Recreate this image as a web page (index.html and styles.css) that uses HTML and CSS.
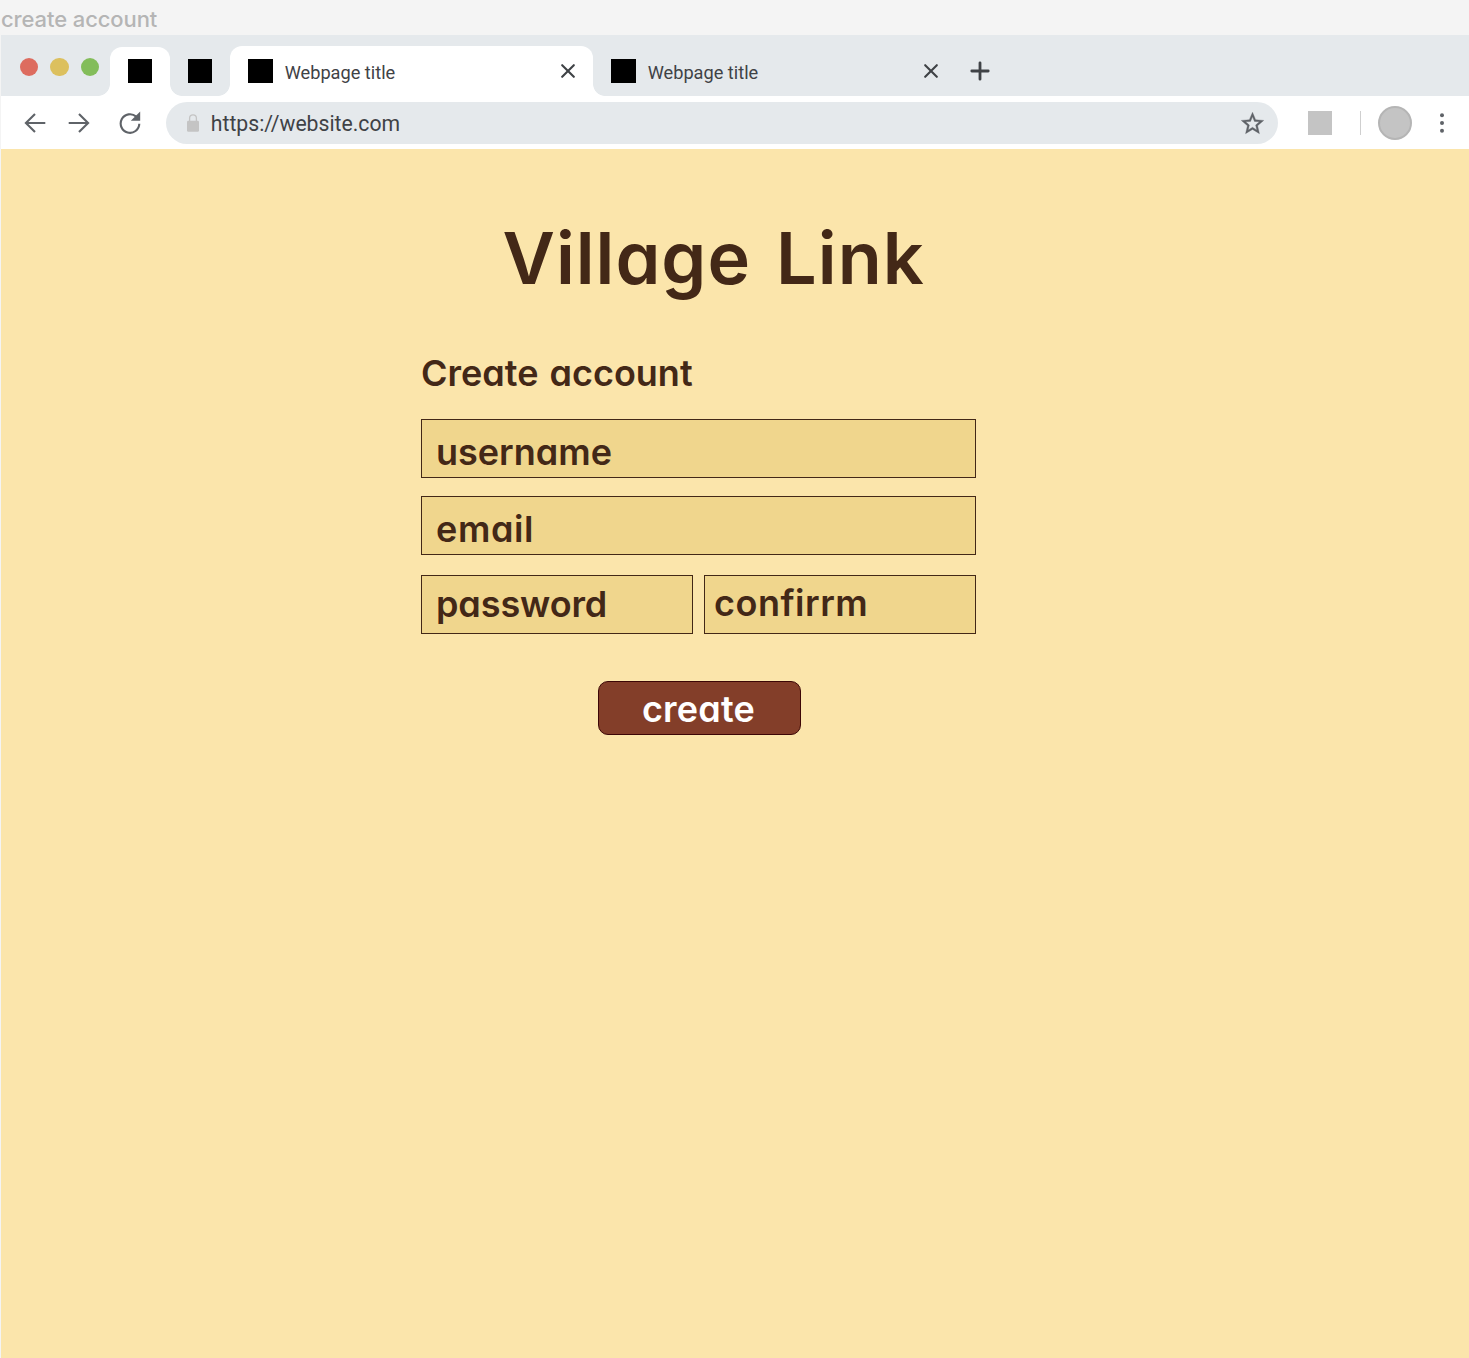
FILE: index.html
```html
<!DOCTYPE html>
<html lang="en">
<head>
<meta charset="utf-8">
<title>create account</title>
<link rel="stylesheet" href="styles.css">
</head>
<body>
<div class="frame-label">create account</div>
<div class="browser">
  <div class="tab-strip">
    <div class="lights"><i class="light red"></i><i class="light yellow"></i><i class="light green"></i></div>
    <div class="tab pinned raised"><i class="favicon"></i></div>
    <div class="tab pinned"><i class="favicon"></i></div>
    <div class="tab wide raised active"><i class="favicon"></i><span class="tab-title">Webpage title</span>
      <svg class="close" viewBox="0 0 14 14"><path d="M1.2 1.2 12.8 12.8M12.8 1.2 1.2 12.8"/></svg></div>
    <div class="tab wide"><i class="favicon"></i><span class="tab-title">Webpage title</span>
      <svg class="close" viewBox="0 0 14 14"><path d="M1.2 1.2 12.8 12.8M12.8 1.2 1.2 12.8"/></svg></div>
    <svg class="new-tab" viewBox="0 0 20 20"><path d="M10 1.8V18.2M1.8 10H18.2"/></svg>
  </div>
  <div class="toolbar">
    <svg class="nav back" viewBox="0 0 22 20"><path d="M21.3 10H2M11 .9 1.9 10l9.1 9.1"/></svg>
    <svg class="nav forward" viewBox="0 0 22 20"><path d="M.7 10H20M11 .9l9.1 9.1-9.1 9.1"/></svg>
    <svg class="reload" viewBox="0 0 22 23"><path class="arc" d="M17.2 5.6A9.3 9.3 0 1 0 20.3 12.8"/><path class="head" d="M21.2 .4V9.8H11.8Z"/></svg>
    <div class="address">
      <svg class="lock" viewBox="0 0 12 18"><rect y="6.8" width="12" height="11" rx="1.4"/><path d="M2.6 7V4.2a3.4 3.4 0 0 1 6.8 0V7"/></svg>
      <span class="url">https://website.com</span>
      <svg class="star" viewBox="0 0 24 24"><path d="M22 9.24l-7.19-.62L12 2 9.19 8.63 2 9.24l5.46 4.73L5.82 21 12 17.27 18.18 21l-1.63-7.03L22 9.24zM12 15.4l-3.76 2.27 1-4.28-3.32-2.88 4.38-.38L12 6.1l1.71 4.04 4.38.38-3.32 2.88 1 4.28L12 15.4z"/></svg>
    </div>
    <i class="extension"></i>
    <i class="divider"></i>
    <i class="avatar"></i>
    <svg class="menu" viewBox="0 0 4 20"><circle cx="2" cy="2.3" r="2"/><circle cx="2" cy="10" r="2"/><circle cx="2" cy="17.7" r="2"/></svg>
  </div>
  <main class="page">
    <h1>Village Link</h1>
    <form class="signup">
      <h2>Create account</h2>
      <div class="field username">username</div>
      <div class="field email">email</div>
      <div class="field-row">
        <div class="field password">password</div>
        <div class="field confirm">confirrm</div>
      </div>
      <button class="create" type="button">create</button>
    </form>
  </main>
</div>
</body>
</html>
```
FILE: styles.css
```css
* { box-sizing: border-box; }
body { margin: 0; background: #f4f4f4; font-family: Roboto, "Liberation Sans", sans-serif; }
i, svg { display: block; flex: none; }
.frame-label { height: 35px; padding-left: 1px; color: #b5b5b5; font: 500 22px/38px Inter, sans-serif; letter-spacing: -.1px; }
.browser { margin-left: 1px; height: 1323px; display: flex; flex-direction: column; overflow: hidden; }

.tab-strip { height: 60.5px; display: flex; align-items: flex-end; background: #e5e9ec; }
.lights { width: 108.5px; height: 100%; padding: 22.5px 0 0 19px; display: flex; gap: 12px; }
.light { flex: none; width: 18.4px; height: 18.4px; border-radius: 50%; }
.red { background: #dd6c5f; }
.yellow { background: #dcc05e; }
.green { background: #83bd5a; }
.tab { position: relative; height: 48.5px; padding: 0 18px; display: flex; align-items: center; }
.pinned { width: 60.4px; }
.wide { width: 363px; }
.active { height: 50px; padding-top: 1.5px; }
.raised { background: #fff; border-radius: 12px 12px 0 0; }
.raised::before, .raised::after { content: ""; position: absolute; bottom: 0; width: 12px; height: 12px; }
.raised::before { right: 100%; background: radial-gradient(circle at 0 0, transparent 11.5px, #fff 12.2px); }
.raised::after { left: 100%; background: radial-gradient(circle at 100% 0, transparent 11.5px, #fff 12.2px); }
.favicon { width: 24.4px; height: 24.4px; background: #000; }
.tab-title { margin: 3px 0 0 12px; flex: 1; font-size: 18.2px; line-height: 24px; color: #3f4246; }
.close { width: 14px; height: 14px; fill: none; stroke: #3f4246; stroke-width: 2.1; stroke-linecap: round; }
.new-tab { width: 20px; height: 20px; margin: 0 0 15px 14px; fill: none; stroke: #3f4246; stroke-width: 2.8; stroke-linecap: round; }

.toolbar { height: 53px; padding: 2px 0 0 23.3px; display: flex; align-items: center; background: #fff; }
.nav { width: 22px; height: 20px; fill: none; stroke: #5f6368; stroke-width: 2.1; }
.forward { margin-left: 21.5px; }
.reload { width: 22px; height: 23px; margin: 0 0 1px 29.5px; }
.arc { fill: none; stroke: #5f6368; stroke-width: 2.1; }
.head { fill: #5f6368; }
.address { width: 1112px; height: 42px; margin-left: 24.5px; padding: 0 12px 0 21px; display: flex; align-items: center; border-radius: 21px; background: #e5e9ec; }
.lock { width: 12px; height: 18px; fill: #c4c4c4; }
.lock path { fill: none; stroke: #c4c4c4; stroke-width: 1.3; }
.url { margin-left: 12px; flex: 1; font-size: 21.2px; color: #3f4246; }
.star { width: 27px; height: 27px; fill: #5f6368; stroke: #5f6368; stroke-width: .3; }
.extension { width: 24px; height: 24px; margin-left: 30px; background: #c4c4c4; }
.divider { width: 1.3px; height: 24px; margin-left: 28px; background: #cfcfcf; }
.avatar { width: 34px; height: 34px; margin-left: 17px; border: 2.6px solid #b5b5b5; border-radius: 50%; background: #c4c4c4; }
.menu { width: 4px; height: 20px; margin-left: 28px; fill: #5f6368; }

.page { flex: 1; background: #fbe5ab; color: #432817; font-family: Inter, sans-serif; font-weight: 600; font-feature-settings: "cv11" 1; }
h1 { margin: 0; padding: 65.5px 0 0 501.5px; font-size: 72px; line-height: 88px; font-weight: 600; letter-spacing: 1px; word-spacing: 6px; white-space: nowrap; }
.signup { width: 555px; margin: 49px 0 0 420px; display: flex; flex-direction: column; }
h2 { margin: -1px 0 23px; font-size: 36px; line-height: 46px; font-weight: 600; word-spacing: 2px; }
.field { height: 59px; padding: 10px 0 0 14px; border: 1.5px solid #432817; background: #f0d68d; font-size: 36px; line-height: 44px; }
.email { margin-top: 18px; letter-spacing: .6px; }
.field-row { display: grid; grid-template-columns: 272px 272px; gap: 11px; margin-top: 20px; }
.password { padding-top: 6px; letter-spacing: -.1px; }
.confirm { padding: 5px 0 0 9px; letter-spacing: .5px; }
.create { width: 203px; height: 54px; margin: 47px 0 0 177px; padding: 1px 2px 0 0; border: 1.5px solid #3c0606; border-radius: 10px; background: #833e29; color: #fff; font: inherit; font-size: 36px; letter-spacing: .2px; }
```
